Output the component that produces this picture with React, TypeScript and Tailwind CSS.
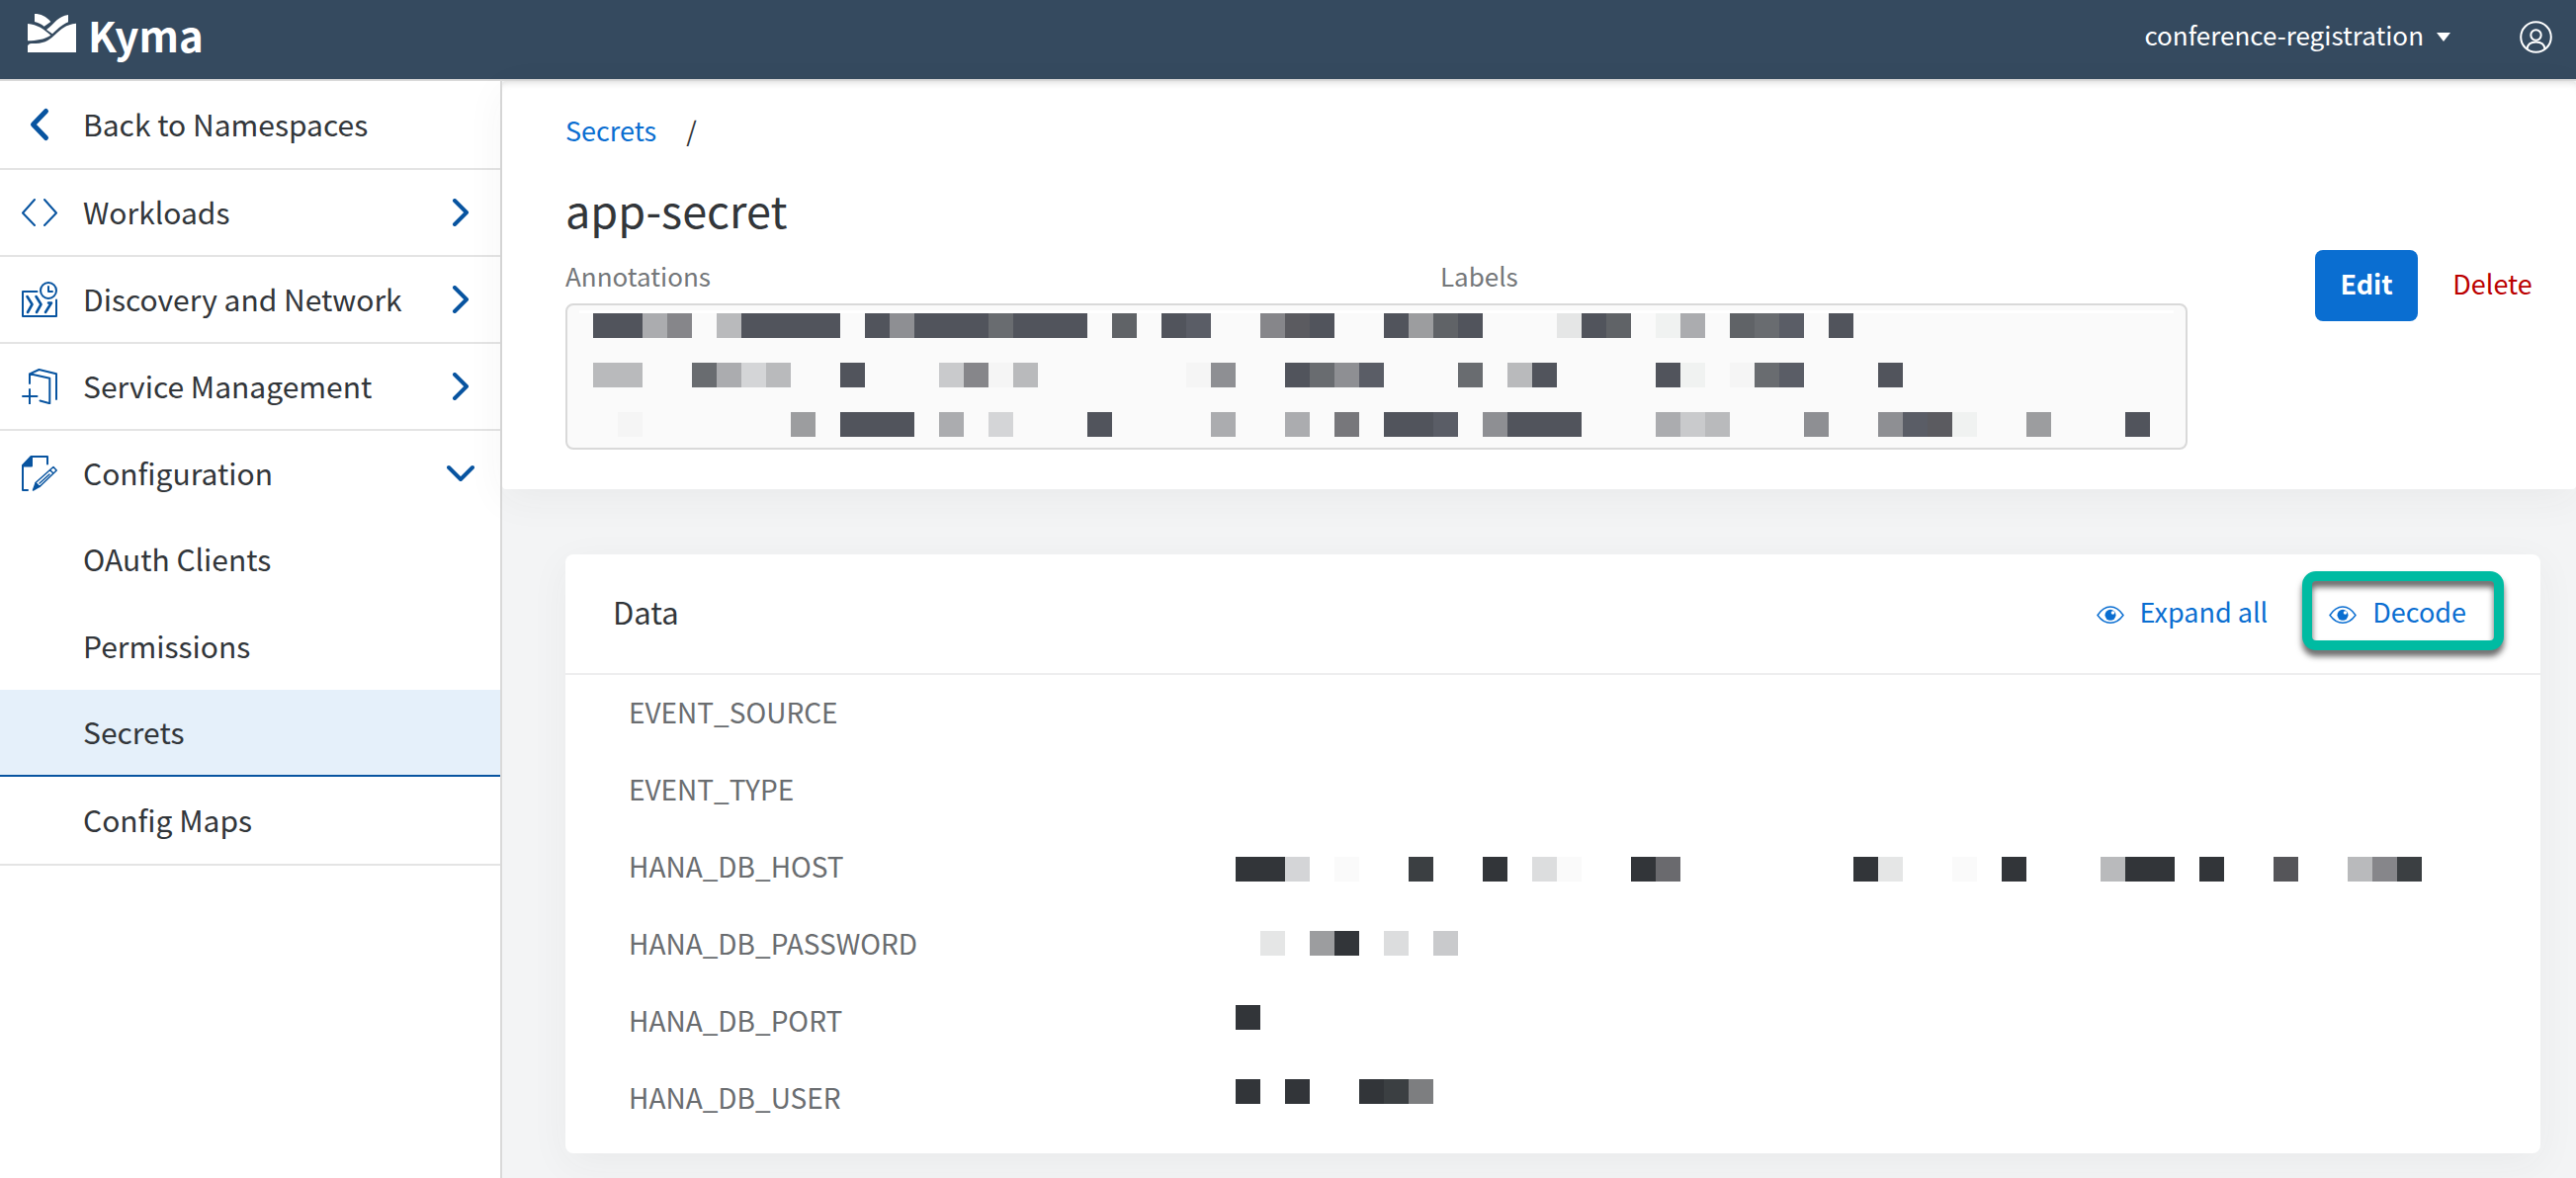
import type { ReactNode } from "react";

const TONES: Record<string, string> = {
  ".": "bg-transparent",
  D: "bg-[#51545c]",
  E: "bg-[#5a5d66]",
  F: "bg-[#5b5b60]",
  G: "bg-[#606367]",
  H: "bg-[#696c70]",
  I: "bg-[#77777b]",
  J: "bg-[#86868a]",
  K: "bg-[#8e8f93]",
  L: "bg-[#9c9d9f]",
  M: "bg-[#abacaf]",
  N: "bg-[#b9babc]",
  O: "bg-[#c9cacc]",
  P: "bg-[#d4d5d7]",
  W: "bg-[#dcddde]",
  Q: "bg-[#e5e6e6]",
  R: "bg-[#f0f2f1]",
  S: "bg-[#f5f5f5]",
  T: "bg-[#fafafa]",
  X: "bg-[#323539]",
  Y: "bg-[#3b3f42]",
  Z: "bg-[#555559]",
  V: "bg-[#6a6a6e]",
  U: "bg-[#7d7e80]",
};

const METADATA_MASK = [
  "DDMJ.NDDDD.DKDDDHDDD.G.DE..JFD..DLGD...QDG.RM.GHE.D............",
  "NN..HMPN..D...OJSN......SK..DHKE...H.ND....DR.SHE...D..........",
  ".S......L.DDD.M.P...D....M..M.I.DDE.KDDD...MON...K..KEFR..L...D",
];

const VALUES_MASK = [
  "XXP.T..Y..X.WT..XV.......XQ..T.X...NXX.X..Z..NJY",
  ".Q.LX.W.O",
  "X",
  "X.X..XYU",
];

const KEYS = [
  "EVENT_SOURCE",
  "EVENT_TYPE",
  "HANA_DB_HOST",
  "HANA_DB_PASSWORD",
  "HANA_DB_PORT",
  "HANA_DB_USER",
];

function Mosaic({ rows, gap }: { rows: string[]; gap: string }) {
  return (
    <div aria-hidden="true" className={`flex flex-col ${gap}`}>
      {rows.map((row, r) => (
        <div key={r} className="flex">
          {row.split("").map((cell, i) => (
            <span key={i} className={`size-[25px] shrink-0 ${TONES[cell]}`} />
          ))}
        </div>
      ))}
    </div>
  );
}

function Icon({ children }: { children: ReactNode }) {
  return (
    <svg
      viewBox="0 0 36 36"
      className="size-9 shrink-0 fill-none stroke-[#0854a0] stroke-2"
      strokeLinecap="round"
      strokeLinejoin="round"
      aria-hidden="true"
    >
      {children}
    </svg>
  );
}

const CodeIcon = () => (
  <Icon>
    <path d="M13 5 1 18.5 13 31M23 5 35 18.5 23 31" />
  </Icon>
);

const DiscoveryIcon = () => (
  <Icon>
    <path d="M15.500 10H1V35H35V18.500" />
    <circle cx="27" cy="9" r="8" />
    <path d="M27 5V10H31" />
    <path d="M5.500 15 10.500 23 6 31M14.500 15 19.500 23 15 31M27 21.500H30L24 31" strokeWidth="2.600" />
  </Icon>
);

const ServiceIcon = () => (
  <Icon>
    <path d="M8 15V5.300L17.500 1 35 5.300V31M8 5.300 28.300 9.700V35.200L18.500 32.500M1 28H15.500M8 21V35.500" />
  </Icon>
);

const ConfigIcon = () => (
  <Icon>
    <path d="M6 35H1V10L9.500 1H26V8.500" />
    <path d="M1 10.500 10 1V10.500Z" className="fill-[#0854a0]" />
    <path d="M14 27.500 32 11.500 35.200 15 18 31.500ZM28.500 14.500 32 18M18 28 28 19" strokeWidth="1.500" />
    <path d="M14 28 17.500 31.500 11.500 35Z" className="fill-[#0854a0]" strokeWidth="1.500" />
  </Icon>
);

const BackIcon = () => (
  <Icon>
    <path d="M24.500 4.500 11.500 18 24.500 31.500" strokeWidth="5" />
  </Icon>
);

function Chevron({ open }: { open?: boolean }) {
  return (
    <svg
      viewBox="0 0 28 28"
      className="size-7 shrink-0 fill-none stroke-[#0854a0]"
      strokeWidth="4"
      strokeLinecap="round"
      strokeLinejoin="round"
      aria-hidden="true"
    >
      <path d={open ? "M2 8 14 20 26 8" : "M8 2 20 14 8 26"} />
    </svg>
  );
}

function EyeIcon() {
  return (
    <svg viewBox="0 0 28 20" className="h-5 w-7 shrink-0" aria-hidden="true">
      <path
        d="M1 11.500C5 5.500 9 3 14 3S23 5.500 27 11.500C23 17 19 19.300 14 19.300S5 17 1 11.500Z"
        className="fill-none stroke-[#0a6ed1]"
        strokeWidth="1.400"
      />
      <circle cx="14" cy="11.300" r="5.500" className="fill-[#0a6ed1]" />
      <circle cx="16.500" cy="9" r="1.800" className="fill-white" />
    </svg>
  );
}

const GROUPS = [
  { label: "Workloads", icon: <CodeIcon /> },
  { label: "Discovery and Network", icon: <DiscoveryIcon /> },
  { label: "Service Management", icon: <ServiceIcon /> },
];

const PAGES = ["OAuth Clients", "Permissions", "Secrets", "Config Maps"];

function Sidebar() {
  return (
    <nav className="flex w-[508px] shrink-0 flex-col border-r-2 border-[#d9d9d9] bg-white text-[30px] leading-9">
      <a href="#namespaces" className="flex h-[90px] items-center gap-[26px] border-b-2 border-[#e4e4e4] pl-[22px]">
        <BackIcon />
        <span className="pb-[3px]">Back to Namespaces</span>
      </a>
      {GROUPS.map((g) => (
        <button
          key={g.label}
          type="button"
          className="flex h-[88px] items-center gap-[26px] border-b-2 border-[#e4e4e4] pr-[26px] pl-[22px] text-left"
        >
          {g.icon}
          <span className="flex-1 pb-[3px]">{g.label}</span>
          <Chevron />
        </button>
      ))}
      <button type="button" aria-expanded="true" className="flex h-[86px] items-center gap-[26px] pr-[26px] pl-[22px] text-left">
        <ConfigIcon />
        <span className="flex-1 pb-[3px]">Configuration</span>
        <Chevron open />
      </button>
      <div className="flex flex-col border-b-2 border-[#e4e4e4]">
        {PAGES.map((p) => (
          <a
            key={p}
            href={`#${p}`}
            className={
              p === "Secrets"
                ? "flex h-[88px] items-center border-b-2 border-[#0854a0] bg-[#e5f0fa] pb-[3px] pl-[84px]"
                : "flex h-[88px] items-center pb-[3px] pl-[84px]"
            }
          >
            {p}
          </a>
        ))}
      </div>
    </nav>
  );
}

function TopBar() {
  return (
    <header className="flex h-[82px] items-center justify-between border-b-2 border-[#d9d9d9] bg-[#354a5f] pr-6 pb-[6px] pl-7 text-white">
      <a href="#home" className="flex items-center gap-3">
        <svg viewBox="0 0 147 117" className="mb-2 h-[39px] w-[49px] fill-white" aria-hidden="true">
          <path d="M21 0C40 0 56 8 70 24L50 38C41 31 31 26 21 24Z" />
          <path d="M123 3V25C101 35 87 50 75 61L57 48C84 27 93 7 123 3Z" />
          <path d="M0 30C29 32 50 47 70 65C48 79 28 80 0 82Z" />
          <path d="M0 117V97C4 89 12 90 25 90C85 88 85 35 147 29V117Z" />
        </svg>
        <span className="pb-1 text-[42px] leading-12 font-bold">Kyma</span>
      </a>
      <div className="flex items-center gap-[70px]">
        <button type="button" className="flex items-center gap-[13px] text-[26px] leading-10">
          <span className="pb-1">conference-registration</span>
          <svg viewBox="0 0 14 9" className="h-[9px] w-[14px] fill-white" aria-hidden="true">
            <path d="M0 0H14L7 9Z" />
          </svg>
        </button>
        <button type="button" aria-label="Account">
          <svg viewBox="0 0 33 33" className="size-[33px] fill-none stroke-white stroke-2" aria-hidden="true">
            <circle cx="16.500" cy="16.500" r="15.300" />
            <circle cx="16.500" cy="14.500" r="5.200" />
            <path d="M7.500 28.500C8 23.500 12 21.500 16.500 21.500S25 23.500 25.500 28.500" />
          </svg>
        </button>
      </div>
    </header>
  );
}

export default function App() {
  return (
    <div className="flex min-h-screen flex-col bg-[#f3f4f5] font-['Noto_Sans_CJK_SC','Open_Sans',sans-serif] text-[#32363a]">
      <TopBar />
      <div className="flex flex-1">
        <Sidebar />
        <main className="min-w-0 flex-1">
          <section className="rounded bg-white pt-[30px] pr-[17px] pb-10 pl-16 shadow-[inset_0_8px_8px_-8px_rgba(0,0,0,0.2),0_10px_40px_rgba(50,54,58,0.05)]">
            <nav aria-label="Breadcrumb" className="flex gap-[30px] text-[27px] leading-10">
              <a href="#secrets" className="text-[#0a6ed1]">
                Secrets
              </a>
              <span>/</span>
            </nav>
            <div className="mt-[26px] flex items-start">
              <div className="min-w-0 flex-1">
                <h1 className="text-[45px] leading-[68px]">app-secret</h1>
                <div className="mt-[13px] grid grid-cols-2 text-[26px] leading-10 text-[#74777a]">
                  <span>Annotations</span>
                  <span>Labels</span>
                </div>
                <div className="mt-2 mr-[129px] overflow-hidden rounded-lg border-2 border-[#d9d9d9] bg-[#fafafa] pt-[5px] pr-3 pb-[11px] pl-3">
                  <div className="border-t-[3px] border-white pl-[14px]">
                    <Mosaic rows={METADATA_MASK} gap="gap-[25px]" />
                  </div>
                </div>
              </div>
              <div className="mt-[75px] flex gap-2">
                <button type="button" className="h-[72px] w-[104px] rounded-lg bg-[#0a6ed1] pb-1 text-[27px] leading-10 font-bold text-white">
                  Edit
                </button>
                <button type="button" className="h-[72px] w-[135px] pb-1 text-[27px] leading-10 text-[#bb0000]">
                  Delete
                </button>
              </div>
            </div>
          </section>

          <section className="mt-[66px] mr-9 mb-[25px] ml-16 rounded-lg bg-white pb-4 shadow-[0_10px_40px_rgba(50,54,58,0.05)]">
            <div className="flex h-[122px] items-center justify-between border-b-2 border-[#eeeeef] pr-[75px] pl-12">
              <h2 className="pb-1 text-[31px] leading-10">Data</h2>
              <div className="flex items-center gap-[62px] text-[27px] leading-10 text-[#0a6ed1]">
                <button type="button" className="flex items-center gap-4">
                  <EyeIcon />
                  <span className="pb-1">Expand all</span>
                </button>
                <button type="button" className="relative flex items-center gap-4">
                  <EyeIcon />
                  <span className="pb-1">Decode</span>
                  <span className="absolute -top-[21px] -right-[38px] -left-[27px] h-20 rounded-[14px] border-[10px] border-[#00bba2] drop-shadow-[0_6px_3px_rgba(0,0,0,0.6)]" />
                </button>
              </div>
            </div>
            <div className="relative">
              <table className="w-full text-[28px] leading-10 text-[#6a6d70]">
                <tbody>
                  {KEYS.map((k) => (
                    <tr key={k} className="h-[78px]">
                      <th scope="row" className="w-[678px] pb-1 pl-16 text-left font-normal">
                        {k}
                      </th>
                      <td />
                    </tr>
                  ))}
                </tbody>
              </table>
              <div className="absolute top-[184px] left-[678px]">
                <Mosaic rows={VALUES_MASK} gap="gap-[50px]" />
              </div>
            </div>
          </section>
        </main>
      </div>
    </div>
  );
}
